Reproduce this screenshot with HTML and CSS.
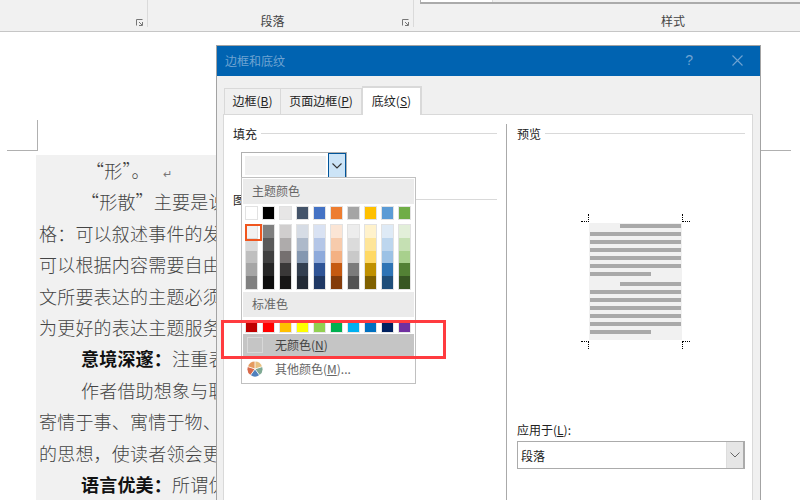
FILE: index.html
```html
<!DOCTYPE html>
<html lang="zh">
<head>
<meta charset="utf-8">
<title>边框和底纹</title>
<link rel="stylesheet" href="styles.css">
</head>
<body>
<header class="ribbon">
  <div class="group group-font">
    <svg class="launcher" width="7" height="7" viewBox="0 0 7 7"><path d="M.5 6.5V.5h6M6.5 3v3.5H3M3 3l3 3" fill="none" stroke="#777"/></svg>
  </div>
  <div class="group group-para">
    <span class="group-name">段落</span>
    <svg class="launcher" width="7" height="7" viewBox="0 0 7 7"><path d="M.5 6.5V.5h6M6.5 3v3.5H3M3 3l3 3" fill="none" stroke="#777"/></svg>
  </div>
  <div class="group group-style">
    <div class="gallery"><div class="gallery-thumb"></div></div>
    <span class="group-name">样式</span>
  </div>
</header>

<main class="workspace">
  <div class="crop crop-left"></div>
  <div class="crop crop-right"></div>
  <article class="doc">
    <p class="center">“形”。<span class="ret">↵</span></p>
    <p class="indent">“形散”主要是说</p>
    <p>格：可以叙述事件的发</p>
    <p>可以根据内容需要自由</p>
    <p>文所要表达的主题必须</p>
    <p>为更好的表达主题服务</p>
    <p class="indent2"><b>意境深邃：</b>注重表</p>
    <p class="indent2">作者借助想象与联</p>
    <p>寄情于事、寓情于物、</p>
    <p>的思想，使读者领会更</p>
    <p class="indent2"><b>语言优美：</b>所谓优</p>
  </article>
</main>

<section class="dialog">
  <div class="titlebar">
    <span class="title">边框和底纹</span>
    <span class="help">?</span>
    <svg class="close" width="11" height="11" viewBox="0 0 11 11"><path d="M.5.5l10 10M10.500.5l-10 10" fill="none" stroke="#6fa3d2" stroke-width="1.100"/></svg>
  </div>
  <div class="tabs">
    <span class="tab tab-a">边框(<u>B</u>)</span>
    <span class="tab tab-b">页面边框(<u>P</u>)</span>
    <span class="tab tab-c">底纹(<u>S</u>)</span>
  </div>
  <div class="panel">
    <div class="col-left">
      <div class="legend"><span>填充</span><i></i></div>
      <div class="fill-combo">
        <div class="fill-value"></div>
        <div class="fill-btn"><svg width="10" height="6" viewBox="0 0 10 6"><path d="M.5.5L5 5 9.500.5" fill="none" stroke="#333" stroke-width="1.100"/></svg></div>
      </div>
      <div class="legend legend-pattern"><span>图案</span><i></i></div>
    </div>
    <div class="col-right">
      <div class="legend"><span>预览</span><i></i></div>
      <div class="preview-wrap">
        <div class="preview">
          <b class="mark tl"></b><b class="mark tr"></b><b class="mark bl"></b><b class="mark br"></b>
          <div class="bar first"></div><div class="bar"></div><div class="bar"></div><div class="bar"></div><div class="bar"></div><div class="bar"></div><div class="bar last"></div>
          <div class="bar first gap"></div><div class="bar"></div><div class="bar"></div><div class="bar"></div><div class="bar"></div><div class="bar"></div><div class="bar last"></div>
        </div>
      </div>
      <div class="apply-label">应用于(<u>L</u>):</div>
      <div class="apply-combo">
        <span>段落</span>
        <div class="apply-btn"><svg width="10" height="6" viewBox="0 0 10 6"><path d="M.5.5L5 5 9.500.5" fill="none" stroke="#666"/></svg></div>
      </div>
    </div>
  </div>

  <div class="menu">
    <div class="menu-head">主题颜色</div>
    <div class="row theme"><span></span><span></span><span></span><span></span><span></span><span></span><span></span><span></span><span></span><span></span></div>
    <div class="row shades"><span class="selected"></span><span></span><span></span><span></span><span></span><span></span><span></span><span></span><span></span><span></span></div>
    <div class="menu-head head-std">标准色</div>
    <div class="row std"><span></span><span></span><span></span><span></span><span></span><span></span><span></span><span></span><span></span><span></span></div>
    <div class="item item-on"><i class="nocolor"></i><span>无颜色(<u>N</u>)</span></div>
    <div class="item">
      <svg class="pie" width="16" height="16" viewBox="0 0 16 16">
        <path d="M8 8V.5A7.500 7.500 0 0 1 15.100 5.700z" fill="#e8c080"/>
        <path d="M8 8l7.100-2.300a7.500 7.500 0 0 1-2.700 8.400z" fill="#7fa994"/>
        <path d="M8 8l4.400 6.100a7.500 7.500 0 0 1-8.800 0z" fill="#4f80bd"/>
        <path d="M8 8l-4.400 6.100A7.500 7.500 0 0 1 .9 5.700z" fill="#d8694a"/>
        <path d="M8 8L.9 5.700A7.500 7.500 0 0 1 8 .5z" fill="#e59a5e"/>
        <path d="M8 8V0M8 8l7.600-2.500M8 8l4.700 6.500M8 8l-4.700 6.500M8 8L.4 5.500" stroke="#fff" stroke-width=".8"/>
      </svg>
      <span>其他颜色(<u>M</u>)...</span>
    </div>
  </div>

  <div class="highlight"></div>
</section>
</body>
</html>
```

FILE: styles.css
```css
* { box-sizing: border-box; }
html, body { margin: 0; height: 100%; }
body {
  position: relative;
  width: 800px;
  height: 500px;
  overflow: hidden;
  background: #fff;
  font-family: "Noto Sans CJK SC", "Liberation Sans", sans-serif;
  font-size: 12px;
  color: #222;
}

/* ribbon */
.ribbon {
  display: flex;
  height: 32px;
  background: #f1f1f1;
  border-bottom: 1px solid #c6c6c6;
}
.group {
  position: relative;
  height: 27px;
  border-right: 1px solid #dadada;
  display: flex;
  justify-content: center;
  align-items: flex-end;
}
.group-font { width: 148px; }
.group-para { width: 266px; padding-right: 16px; }
.group-style { flex: 1; border-right: 0; padding-left: 132px; }
.group-name { font-size: 12px; line-height: 16px; color: #444; margin-bottom: -2px; }
.launcher { position: absolute; right: 4px; bottom: 1px; }
.gallery {
  position: absolute;
  left: 6px;
  right: 0;
  top: 0;
  height: 4px;
  border-left: 1px solid #b0b0b0;
  border-bottom: 2px solid #ababab;
}
.gallery-thumb { width: 72px; height: 2px; background: #fff; border-right: 1px solid #ddd; }

/* document */
.workspace {
  position: relative;
  height: 468px;
  padding: 123px 0 0 36px;
}
.crop { position: absolute; top: 88px; width: 31px; height: 31px; border-bottom: 1px solid #b0b0b0; }
.crop-left { left: 7px; border-right: 1px solid #b0b0b0; }
.crop-right { left: 760px; border-left: 1px solid #b0b0b0; }
.doc {
  width: 190px;
  height: 345px;
  overflow: hidden;
  background: #f1f1f1;
  padding: 0 0 0 3px;
  font-size: 18px;
  font-weight: 300;
  color: #444;
  white-space: nowrap;
}
.doc p { margin: 0; height: 31.400px; line-height: 31.400px; letter-spacing: .2px; }
.doc b { color: #111; font-weight: 700; }
.center { padding-left: 47px; }
.indent { padding-left: 42px; }
.indent2 { padding-left: 42px; }
.ret { font-size: 11px; color: #777; margin-left: 13px; }

/* dialog */
.dialog {
  position: absolute;
  left: 216px;
  top: 45px;
  width: 545px;
  height: 455px;
  background: #f0f0f0;
  border: 1px solid #a3a3a3;
  border-bottom: 0;
}
.titlebar {
  display: flex;
  align-items: center;
  height: 30px;
  background: #0063b1;
  padding: 0 17px 2px 8px;
  color: #6fa3d2;
}
.title { font-size: 12px; flex: 1; }
.help { font-size: 14px; margin-right: 39px; font-family: "Liberation Sans", sans-serif; }
.close { display: block; }
.tabs {
  display: flex;
  align-items: flex-end;
  height: 38px;
  padding-left: 7px;
}
.tab {
  height: 26px;
  line-height: 24px;
  text-align: center;
  background: #f0f0f0;
  border: 1px solid #d9d9d9;
  border-bottom: 0;
}
.tab-a { width: 57px; }
.tab-b { width: 81px; border-left: 0; }
.tab-c { width: 60px; height: 29px; line-height: 25px; background: #fff; margin-bottom: -1px; position: relative; z-index: 1; border-width: 2px 2px 0 1px; }
.panel {
  display: flex;
  height: 387px;
  margin: 0 7px 0 6px;
  background: #fff;
  border: 1px solid #d9d9d9;
  border-bottom: 0;
  padding: 9px 7px 0 9px;
}
.col-left { width: 273px; padding-right: 9px; }
.col-right { flex: 1; border-left: 1px solid #aaa; padding-left: 10px; }
.legend { display: flex; align-items: center; gap: 4px; height: 18px; }
.legend i { flex: 1; height: 1px; background: #d9d9d9; }
.fill-combo {
  display: flex;
  width: 106px;
  height: 27px;
  margin: 10px 0 0 8px;
  border: 1px solid #b0b0b0;
}
.fill-value { flex: 1; margin: 3px 2px 3px 3px; background: #f0f0f0; }
.fill-btn {
  width: 18px;
  display: flex;
  align-items: center;
  justify-content: center;
  background: #cce4f7;
  border: 1px solid #005499;
}
.legend-pattern { margin-top: 11px; }

.preview-wrap { height: 229px; padding: 81px 0 0 72px; }
.preview {
  position: relative;
  width: 93px;
  height: 117px;
  background: #f1f1f1;
  padding: 1px 1px 0;
}
.bar { height: 4px; margin-bottom: 4px; background: #a9a9a9; }
.bar.first { margin-left: 30px; }
.bar.last { width: 61px; }
.bar.gap { margin-top: 6px; }
.mark { position: absolute; width: 8px; height: 8px; }
.tl { left: -8px; top: -9px; border-right: 1px dotted #000; border-bottom: 1px dotted #000; }
.tr { right: -8px; top: -9px; border-left: 1px dotted #000; border-bottom: 1px dotted #000; }
.bl { left: -8px; bottom: -9px; border-right: 1px dotted #000; border-top: 1px dotted #000; }
.br { right: -8px; bottom: -9px; border-left: 1px dotted #000; border-top: 1px dotted #000; }
.apply-label { height: 18px; line-height: 18px; margin-top: 50px; margin-bottom: 2px; }
.apply-combo {
  display: flex;
  align-items: center;
  width: 228px;
  height: 28px;
  border: 1px solid #ababab;
  padding-left: 3px;
}
.apply-combo span { flex: 1; }
.apply-btn {
  width: 18px;
  height: 100%;
  display: flex;
  align-items: center;
  justify-content: center;
  background: #e6e6e6;
  border-left: 1px solid #ddd;
  border-right: 1px solid #ababab;
}

/* colour menu */
.menu {
  position: absolute;
  left: 24px;
  top: 131px;
  width: 175px;
  height: 207px;
  background: #fff;
  border: 1px solid #c0c0c0;
  padding: 1px;
  color: #666;
}
.menu-head {
  height: 25px;
  line-height: 24px;
  padding-left: 9px;
  background: #ebebeb;
  color: #666;
}
.row { display: flex; gap: 4px; padding-left: 2px; }
.row span { display: block; position: relative; width: 13px; border: 1px solid #e2e2e2; }
.theme { height: 14px; margin-top: 2px; }
.shades { height: 66px; margin-top: 4px; }
.head-std { margin-top: 2px; }
.std { height: 11px; margin-top: 5px; }
.std span { border-color: #e6e6e6; }
.selected::after {
  content: "";
  position: absolute;
  left: -1px;
  top: -1px;
  width: 13px;
  height: 13px;
  border: 2px solid #f0561e;
}
.theme span:nth-child(1) { background: #fff; }
.theme span:nth-child(2) { background: #000; }
.theme span:nth-child(3) { background: #e7e6e6; }
.theme span:nth-child(4) { background: #44546a; }
.theme span:nth-child(5) { background: #4472c4; }
.theme span:nth-child(6) { background: #ed7d31; }
.theme span:nth-child(7) { background: #a5a5a5; }
.theme span:nth-child(8) { background: #ffc000; }
.theme span:nth-child(9) { background: #5b9bd5; }
.theme span:nth-child(10) { background: #70ad47; }
.std span:nth-child(1) { background: #c00000; }
.std span:nth-child(2) { background: #f00; }
.std span:nth-child(3) { background: #ffc000; }
.std span:nth-child(4) { background: #ff0; }
.std span:nth-child(5) { background: #92d050; }
.std span:nth-child(6) { background: #00b050; }
.std span:nth-child(7) { background: #00b0f0; }
.std span:nth-child(8) { background: #0070c0; }
.std span:nth-child(9) { background: #002060; }
.std span:nth-child(10) { background: #7030a0; }
.shades span:nth-child(1) { background: linear-gradient(#f2f2f2 20%, #d9d9d9 20% 40%, #bfbfbf 40% 60%, #a6a6a6 60% 80%, #808080 80%); }
.shades span:nth-child(2) { background: linear-gradient(#7f7f7f 20%, #595959 20% 40%, #404040 40% 60%, #262626 60% 80%, #0d0d0d 80%); }
.shades span:nth-child(3) { background: linear-gradient(#d0cece 20%, #aeabab 20% 40%, #757070 40% 60%, #3a3838 60% 80%, #171616 80%); }
.shades span:nth-child(4) { background: linear-gradient(#d6dce5 20%, #adb9ca 20% 40%, #8497b0 40% 60%, #333f50 60% 80%, #222a35 80%); }
.shades span:nth-child(5) { background: linear-gradient(#d9e2f3 20%, #b4c6e7 20% 40%, #8eaadb 40% 60%, #2f5496 60% 80%, #1f3864 80%); }
.shades span:nth-child(6) { background: linear-gradient(#fbe5d5 20%, #f7cbac 20% 40%, #f4b183 40% 60%, #c55a11 60% 80%, #833c0b 80%); }
.shades span:nth-child(7) { background: linear-gradient(#ededed 20%, #dbdbdb 20% 40%, #c9c9c9 40% 60%, #7b7b7b 60% 80%, #525252 80%); }
.shades span:nth-child(8) { background: linear-gradient(#fff2cc 20%, #fee599 20% 40%, #ffd965 40% 60%, #bf9000 60% 80%, #7f6000 80%); }
.shades span:nth-child(9) { background: linear-gradient(#deeaf6 20%, #bdd6ee 20% 40%, #9cc2e5 40% 60%, #2e74b5 60% 80%, #1f4e79 80%); }
.shades span:nth-child(10) { background: linear-gradient(#e2efd9 20%, #c5e0b3 20% 40%, #a8d08d 40% 60%, #538135 60% 80%, #375623 80%); }
.item {
  display: flex;
  align-items: center;
  height: 24px;
  padding: 0 0 3px 4px;
  color: #666;
}
.item svg, .nocolor { flex: none; margin-right: 12px; }
.item-on { background: #c5c5c5; color: #444; margin-top: 1px; }
.nocolor { display: block; width: 16px; height: 16px; border: 1px solid #d8d8d8; }
.highlight {
  position: absolute;
  left: 4px;
  top: 274px;
  width: 225px;
  height: 39px;
  border: 3px solid #ff3b3f;
}
```
